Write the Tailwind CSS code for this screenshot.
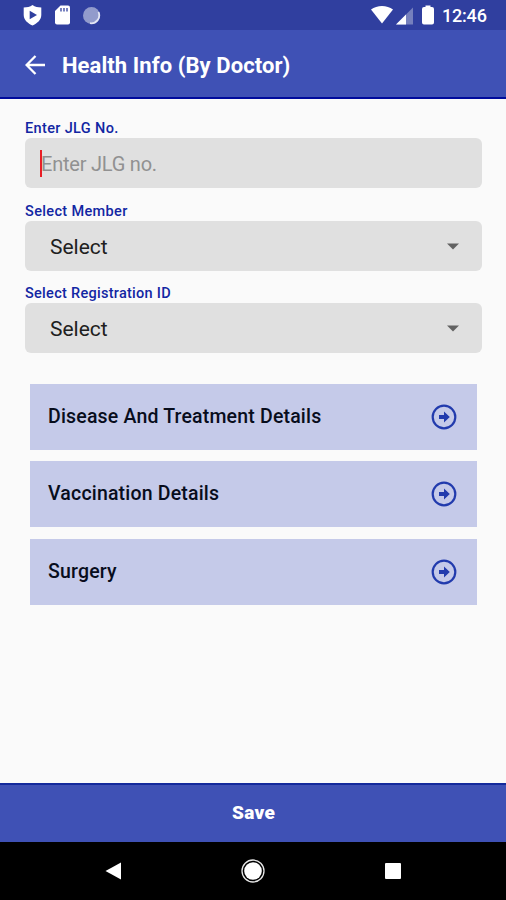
<!DOCTYPE html>
<html lang="en">
<head>
<meta charset="utf-8">
<title>Health Info (By Doctor)</title>
<script src="https://cdn.jsdelivr.net/npm/@tailwindcss/browser@4"></script>
</head>
<body class="w-[506px] h-[900px] overflow-hidden bg-[#fafafa] font-['Roboto',sans-serif] flex flex-col">
  <div class="h-[30px] shrink-0 bg-[#303f9f] text-white flex items-center">
    <svg class="ml-[23px] w-[20px] h-[22px]" viewBox="0 0 20 22"><path fill="#fff" d="M9.5 1C12 2.8 15 3.4 18.300 3.500V11C18.300 16 14 19.500 9.500 21.500C5 19.500 .700 16 .700 11V3.500C4 3.400 7 2.800 9.500 1Z"/><path fill="#303f9f" d="M6.700 6.700L14 11L6.700 15.200Z"/></svg>
    <svg class="ml-[11px] w-[17px] h-[20px]" viewBox="0 0 17 20"><path fill="#fff" d="M6.500 .500H14Q16 .500 16 2.500V17.500Q16 19.500 14 19.500H3Q1 19.500 1 17.500V6Z"/><path stroke="#303f9f" stroke-width="1.300" d="M7 3V6.500M10 3V6.500M13 3V6.500"/></svg>
    <svg class="ml-[11px] w-[19px] h-[19px]" viewBox="0 0 19 19"><circle cx="9.500" cy="9.500" r="8.500" fill="#929bcc"/><path d="M16.500 6A8 8 0 0 1 8 17.200" fill="none" stroke="#e3e6f4" stroke-width="1.800"/></svg>
    <svg class="ml-auto w-[22px] h-[20px]" viewBox="0 0 22 20"><path fill="#fff" d="M0 4.500C6-.300 16-.300 22 4.500L11 18.500Z"/></svg>
    <svg class="ml-[3px] w-[17px] h-[18px] mt-[1px]" viewBox="0 0 17 18"><path fill="#7680bd" d="M0 17.500L17 .500V17.500Z"/><path fill="#fff" d="M0 17.500L10 7.500V17.500Z"/></svg>
    <svg class="ml-[9px] w-[12px] h-[20px]" viewBox="0 0 12 20"><path fill="#fff" d="M3.500 .500H8.500V2H10Q12 2 12 4V17.500Q12 19.500 10 19.500H2Q0 19.500 0 17.500V4Q0 2 2 2H3.500Z"/></svg>
    <span class="ml-[8px] mr-[19px] w-[45px] whitespace-nowrap text-[18px] tracking-[-0.2px] leading-[30px] font-medium pt-[2px]">12:46</span>
  </div>
  <header class="h-[69px] shrink-0 bg-[#3f51b5] border-b-2 border-[#000b9c] text-white flex items-center">
    <svg class="ml-[25px] mt-[2px] w-[21px] h-[20px]" viewBox="0 0 21 20" fill="none" stroke="#fff" stroke-width="2.300"><path d="M20 10H2M10.500 1L1.600 10L10.500 19"/></svg>
    <h1 class="ml-[16px] text-[22px] tracking-[0.08px] leading-[30px] font-bold whitespace-nowrap pt-[5px]">Health Info (By Doctor)</h1>
  </header>
  <main class="flex-1 px-[25px] pt-[20px] w-[507px]">
    <label class="block h-[19px] leading-[19px] text-[14.5px] tracking-[0.35px] font-medium text-[#1226a3]">Enter JLG No.</label>
    <div class="h-[50px] rounded-[6px] bg-[#e0e0e0] pl-[15px] flex items-center">
      <span class="w-[2px] h-[27px] bg-[#e91d25]"></span>
      <span class="-ml-[1px] pt-[2px] text-[20px] tracking-[-0.22px] text-[#919191]">Enter JLG no.</span>
    </div>
    <label class="block mt-[14px] h-[19px] leading-[19px] text-[14.5px] tracking-[0.35px] font-medium text-[#1226a3]">Select Member</label>
    <div class="h-[50px] rounded-[6px] bg-[#e0e0e0] pl-[25px] pr-[23px] flex items-center justify-between">
      <span class="pt-[3px] text-[21px] text-[#202020]">Select</span>
      <svg class="w-[12px] h-[7px]" viewBox="0 0 12 7"><path fill="#626262" d="M0 .500H12L6 6.500Z"/></svg>
    </div>
    <label class="block mt-[13px] h-[19px] leading-[20px] text-[14.5px] tracking-[0.28px] font-medium text-[#1226a3]">Select Registration ID</label>
    <div class="h-[50px] rounded-[6px] bg-[#e0e0e0] pl-[25px] pr-[23px] flex items-center justify-between">
      <span class="pt-[3px] text-[21px] text-[#202020]">Select</span>
      <svg class="w-[12px] h-[7px]" viewBox="0 0 12 7"><path fill="#626262" d="M0 .500H12L6 6.500Z"/></svg>
    </div>
    <div class="mt-[31px] mx-[5px] flex flex-col">
      <div class="h-[66px] bg-[#c5cae9] pl-[18px] pr-[20px] flex items-center justify-between text-[19.5px] tracking-[0.18px] font-medium text-[#080d1c]"><span>Disease And Treatment Details</span>
        <svg class="w-[26px] h-[26px]" viewBox="0 0 26 26"><circle cx="13" cy="13" r="11.300" fill="none" stroke="#223bad" stroke-width="2.200"/><path fill="#223bad" d="M8 11H13V7.500L18.800 13L13 18.500V15H8Z"/></svg></div>
      <div class="mt-[11px] h-[66px] bg-[#c5cae9] pl-[18px] pr-[20px] flex items-center justify-between text-[19.5px] tracking-[0.18px] font-medium text-[#080d1c]"><span>Vaccination Details</span>
        <svg class="w-[26px] h-[26px]" viewBox="0 0 26 26"><circle cx="13" cy="13" r="11.300" fill="none" stroke="#223bad" stroke-width="2.200"/><path fill="#223bad" d="M8 11H13V7.500L18.800 13L13 18.500V15H8Z"/></svg></div>
      <div class="mt-[12px] h-[66px] bg-[#c5cae9] pl-[18px] pr-[20px] flex items-center justify-between text-[19.5px] tracking-[0.18px] font-medium text-[#080d1c]"><span>Surgery</span>
        <svg class="w-[26px] h-[26px]" viewBox="0 0 26 26"><circle cx="13" cy="13" r="11.300" fill="none" stroke="#223bad" stroke-width="2.200"/><path fill="#223bad" d="M8 11H13V7.500L18.800 13L13 18.500V15H8Z"/></svg></div>
    </div>
  </main>
  <button class="h-[59px] shrink-0 bg-[#3f51b5] border-t-2 border-[#142a9c] text-white text-[19px] tracking-[0.3px] font-black flex items-center justify-center pl-[1px]">Save</button>
  <nav class="h-[58px] shrink-0 bg-black flex items-center">
    <svg class="ml-[105px] w-[17px] h-[18px]" viewBox="0 0 17 18"><path fill="#fff" d="M.500 9L16 .500V17.500Z"/></svg>
    <svg class="ml-[119px] w-[24px] h-[24px]" viewBox="0 0 24 24"><circle cx="12" cy="12" r="8.800" fill="#fff"/><circle cx="12" cy="12" r="11" fill="none" stroke="#e8e8e8" stroke-width="1.300"/></svg>
    <span class="ml-[120px] w-[16px] h-[16px] rounded-[1px] bg-white"></span>
  </nav>
</body>
</html>
